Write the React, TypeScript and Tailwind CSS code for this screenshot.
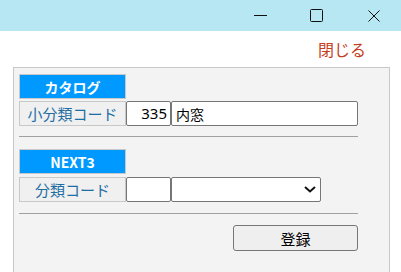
import React from 'react';

const jp = { fontFamily: '"Noto Sans CJK JP", "Noto Sans", sans-serif' };

const SectionHeader: React.FC<{ label: string }> = ({ label }) => (
  <div className="w-[107px] h-[25px] flex items-center justify-center bg-[#0099ff] border border-[#c8c8c8] text-white text-[14px] font-semibold leading-none">
    {label}
  </div>
);

const FieldLabel: React.FC<{ label: string }> = ({ label }) => (
  <div className="w-[107px] h-[25px] flex items-center justify-center bg-[#f0f0f0] border border-[#c8c8c8] text-[#1f6ea3] text-[15px] leading-none">
    {label}
  </div>
);

const App: React.FC = () => {
  return (
    <div className="w-[401px] h-[272px] overflow-hidden bg-white" style={jp}>
      {/* Title bar */}
      <div className="h-[31px] bg-[#b6e7f2] flex items-center justify-end pr-[21px]">
        <svg width="13" height="13" viewBox="0 0 13 13" className="mb-[1px]">
          <line x1="0" y1="6.5" x2="13" y2="6.5" stroke="#111" strokeWidth="1" />
        </svg>
        <svg width="13" height="13" viewBox="0 0 13 13" className="ml-[43px]">
          <rect x="0.5" y="0.5" width="12" height="12" rx="1" fill="none" stroke="#111" strokeWidth="1" />
        </svg>
        <svg width="12" height="12" viewBox="0 0 12 12" className="ml-[45px]">
          <path d="M0.5 0.5 L11.5 11.5 M11.5 0.5 L0.5 11.5" stroke="#111" strokeWidth="1" />
        </svg>
      </div>

      {/* Close link */}
      <div className="h-[36px] flex items-center justify-end pr-[35px]">
        <span className="text-[16px] text-[#c43d24] leading-none">閉じる</span>
      </div>

      {/* Panel */}
      <div className="ml-[13px] w-[377px] h-[210px] bg-[#f3f3f3] border border-[#c8c8c8] pt-[6px] pl-[5px]">
        <SectionHeader label="カタログ" />
        <div className="flex mt-[2px]">
          <FieldLabel label="小分類コード" />
          <div className="w-[45px] h-[25px] bg-white border border-[#767676] rounded-[2px] flex items-center justify-end pr-[3px] text-[15px] text-black leading-none" style={{ fontFamily: '"Noto Sans", sans-serif' }}>
            335
          </div>
          <div className="w-[187px] h-[25px] bg-white border border-[#767676] rounded-[2px] flex items-center pl-[4px] text-[14px] text-black leading-none">
            内窓
          </div>
        </div>
        <div className="w-[339px] h-px bg-[#a0a0a0] mt-[10px]" />

        <div className="mt-[12px]">
          <SectionHeader label="NEXT3" />
        </div>
        <div className="flex mt-[3px]">
          <FieldLabel label="分類コード" />
          <div className="w-[45px] h-[25px] bg-white border border-[#767676] rounded-[2px]" />
          <div className="w-[150px] h-[25px] bg-white border border-[#767676] rounded-[2px] flex items-center justify-end pr-[4px]">
            <svg width="12" height="7" viewBox="0 0 12 7">
              <path d="M1 1 L6 5.5 L11 1" fill="none" stroke="#111" strokeWidth="2" />
            </svg>
          </div>
        </div>
        <div className="w-[339px] h-px bg-[#a0a0a0] mt-[11px]" />

        <div className="w-[339px] flex justify-end mt-[11px]">
          <button className="w-[125px] h-[26px] bg-[#efefef] border border-[#767676] rounded-[3px] text-[15px] text-black leading-none">
            登録
          </button>
        </div>
      </div>
    </div>
  );
};

export default App;
